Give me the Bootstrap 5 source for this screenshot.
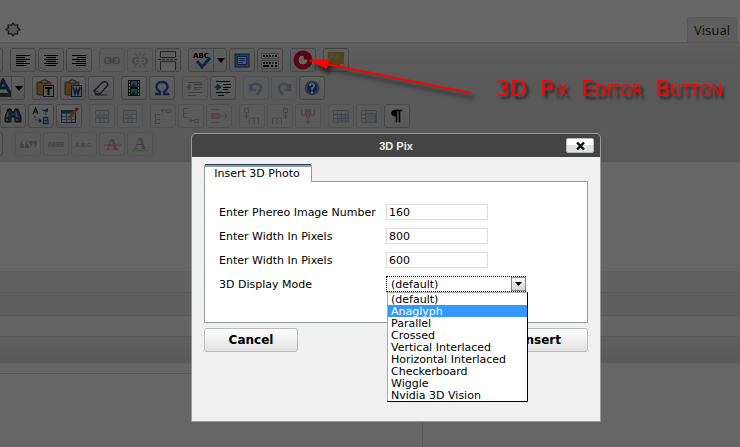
<!DOCTYPE html>
<html lang="en">
<head>
<meta charset="utf-8">
<meta name="viewport" content="width=device-width, initial-scale=1">
<title>3D Pix</title>
<link href="https://cdn.jsdelivr.net/npm/bootstrap@5.3.0/dist/css/bootstrap.min.css" rel="stylesheet">
<style>
body{font:11px/12px "DejaVu Sans",Verdana,sans-serif;color:#000;background:#fff}
.page{min-height:100vh}
.top-strip{height:43px;border-bottom:1px solid #d6d6d6}
.visual-tab{height:25px;width:50px;font:13px/20px "Noto Sans",sans-serif;color:#333;background:#ebebeb;border:1px solid #dcdcdc;border-bottom:0;border-radius:3px 3px 0 0;margin-right:3px;padding:0}
.tools{height:119px;background:linear-gradient(#ebebeb,#dedede 32px);padding-top:5px;gap:4px}
.tool-row{height:24px;gap:7px}
.tool-set{gap:2px}
.shift-a{margin-left:-23px}
.shift-b{margin-left:-14px}
.wide-gap{margin-right:5px}
.tool{width:26px;height:24px;padding:0;border:1px solid #b0b0b0;border-radius:3px;background:linear-gradient(#ececec,#dcdcdc);flex:none}
.tool.split{width:39px}
.tool:disabled{border-color:#c9c9c9;opacity:1;background:#e0e0e0}
.tool:disabled svg{opacity:.3}
.tool svg{display:block;width:20px;height:20px}
.tool .arrow-part{width:13px;height:22px;border-left:1px solid #b0b0b0}
.arrow-part svg{width:9px;height:5px}
.canvas-area{height:109px}
.band-a{height:22px;background:#f3f3f3;border-top:1px solid #ededed;border-bottom:1px solid #dcdcdc}
.band-b{height:23px;background:#ececec;border-bottom:1px solid #d8d8d8}
.band-c{height:21px;background:#fafafa;border-bottom:1px solid #dcdcdc}
.band-d{height:26px;background:linear-gradient(#eee,#e1e1e1)}
.meta{margin-top:10px;width:57.16%;border:solid #dcdcdc;border-width:1px 1px 0 0}
.shade{position:fixed;inset:0;background:rgba(0,0,0,.6)}
.note{position:absolute;left:300px;top:44px}
.note-text{display:flex;gap:13px;margin:33px 0 0 196px;font-size:22px;line-height:24px;font-variant:small-caps;color:#f00;text-shadow:3px 3px 3px #222;white-space:nowrap}
.note svg{position:absolute;left:0;top:0;overflow:visible}
.dialog-box{position:absolute;left:191px;top:133px;width:410px;border:1px solid #999;border-radius:5px 5px 0 0;background:#f0f0f0}
.dialog-head{height:23px;background:#444;border-radius:4px 4px 0 0;font:bold 11px/22px "Liberation Sans",Arial,sans-serif;color:#eee;display:grid;grid-template-columns:1fr auto 1fr;align-items:center;padding:0 6px}
.close-x{width:28px;height:15px;border:1px solid #bbb;border-radius:2px;background:linear-gradient(#fff 50%,#dde1e1 50%)}
.dialog-main{padding:7px 12px 69px}
.photo-tab{height:18px;width:108px;border:1px solid #919b9c;border-top:3px solid #8a9dad;border-bottom:0;border-radius:3px 3px 0 0;background:#fcfcfe;position:relative;z-index:1;margin-bottom:-1px;padding:0 2px 1px 0;line-height:12px;font-size:11px}
.photo-tab::before{content:"";position:absolute;left:0;right:0;top:-3px;height:1px;background:#2c4058}
.pane{border:1px solid #919b9c;background:#fff;padding:22px 14px 30px;display:grid;gap:8px}
.field-line{display:grid;grid-template-columns:167px 1fr;align-items:center;height:16px}
.field-line label{padding-top:2px}
.text-in{width:102px;height:16px;border:1px solid #dcdcdc;padding:0 2px;font-size:11px;line-height:14px;border-radius:0;color:#000;background:#fff}
.mode{position:relative;width:141px}
.mode select{display:block;appearance:none;width:140px;height:16px;border:1px dotted #000;border-radius:0;padding:1px 4px 0;background:#fff;color:#000;font-size:11px;line-height:14px}
.drop-mark{position:absolute;right:1px;top:1px;width:15px;height:14px;border:1px solid #888;background:linear-gradient(#fff,#d4d4d4);pointer-events:none}
.choices{position:absolute;z-index:3;left:1px;top:16px;width:141px;border:solid #000;border-width:1px;border-top-color:#aaa;border-left-color:#aaa;background:#fff;margin:0;padding:0;list-style:none}
.choices li{height:12px;padding-left:3px;line-height:13px}
.choices .chosen{background:#39f;color:#fff}
.actions{margin-top:5px}
.act{width:94px;height:24px;border:1px solid #bbb;border-radius:3px;background:linear-gradient(#fff,#e2e2e2);font-size:12px;font-weight:bold;color:#000;padding:0}
</style>
<script src="https://cdn.jsdelivr.net/npm/bootstrap@5.3.0/dist/js/bootstrap.bundle.min.js"></script>
</head>
<body class="overflow-hidden">
<div class="page d-flex flex-column">
  <div class="top-strip d-flex justify-content-between align-items-end">
    <svg class="align-self-center ms-1 mt-3" width="18" height="18" viewBox="0 0 18 18" aria-hidden="true"><path d="M9 3l1.800 2.300 3-.6-.2 2.900L16 9.500l-2.500 1.500.1 3-2.900-.3L9 16l-1.700-2.300-2.900.3.1-3L2 9.500l2.400-1.900-.2-2.900 3 .6z" fill="#ddd" stroke="#444" stroke-width="1.300"/></svg>
    <button class="visual-tab" type="button">Visual</button>
  </div>
  <div class="tools d-flex flex-column overflow-hidden">
    <div class="tool-row d-flex shift-a">
      <div class="tool-set d-flex"><button class="tool" aria-label="Quote"></button></div>
      <div class="tool-set d-flex">
        <button class="tool d-flex align-items-center justify-content-center" aria-label="Align left"><svg viewBox="0 0 20 20"><path d="M3 5.500h14M3 7.500h9M3 9.500h14M3 11.500h10M3 13.500h14M3 15.500h10" stroke="#000"/></svg></button>
        <button class="tool d-flex align-items-center justify-content-center" aria-label="Align center"><svg viewBox="0 0 20 20"><path d="M3 5.500h14M5 7.500h10M3 9.500h14M5 11.500h10M3 13.500h14M5 15.500h10" stroke="#000"/></svg></button>
        <button class="tool d-flex align-items-center justify-content-center" aria-label="Align right"><svg viewBox="0 0 20 20"><path d="M3 5.500h14M8 7.500h9M3 9.500h14M7 11.500h10M3 13.500h14M7 15.500h10" stroke="#000"/></svg></button>
      </div>
      <div class="tool-set d-flex">
        <button disabled class="tool d-flex align-items-center justify-content-center" aria-label="Link"><svg viewBox="0 0 20 20"><g fill="none" stroke="#335" stroke-width="1.600"><rect x="3" y="7.500" width="6" height="6" rx="2.500"/><rect x="11" y="7.500" width="6" height="6" rx="2.500"/><path d="M6.500 10.500h7"/></g></svg></button>
        <button disabled class="tool d-flex align-items-center justify-content-center" aria-label="Unlink"><svg viewBox="0 0 20 20"><g fill="none" stroke="#335" stroke-width="1.500"><path d="M9 8H5.500q-2.500 0-2.500 3t2.500 3H8M11 8h3.500q2.500 0 2.500 3t-2.500 3H12M6 11h3M12 11h2"/><path d="M10 2v3M5 3l2 3M15 3l-2 3M10 15v3M6 15l-2 3M14 15l2 3" stroke-width="1"/></g></svg></button>
        <button class="tool d-flex align-items-center justify-content-center" aria-label="Page break"><svg viewBox="0 0 20 20"><path d="M2.500 1v6.500h15V1M2.500 1.500h15M2.500 20v-8.500h15V20" fill="#ececec" stroke="#6b5548"/><path d="M0 9.500h20" stroke="#36c" stroke-dasharray="3 1"/></svg></button>
      </div>
      <div class="tool-set d-flex">
        <button class="tool split d-flex align-items-center justify-content-between ps-1" aria-label="Spell check"><svg viewBox="0 0 20 20"><text x="0" y="8" font-family="DejaVu Sans" font-size="7" font-weight="bold">ABC</text><path d="M4 11l5 6 8-9" stroke="#2858b0" stroke-width="3" fill="none"/></svg><span class="arrow-part d-flex align-items-center justify-content-center"><svg viewBox="0 0 9 5"><path d="M1 0h8L5 5z"/></svg></span></button>
        <button class="tool d-flex align-items-center justify-content-center" aria-label="Full screen"><svg viewBox="0 0 20 20"><rect x="3" y="4" width="14" height="13" fill="#69c" stroke="#258"/><rect x="5.500" y="6.500" width="9" height="8" fill="#cdd8ee" stroke="#25a"/><path d="M7 8.500h6M7 10.500h6M7 12.500h4" stroke="#36b"/></svg></button>
        <button class="tool d-flex align-items-center justify-content-center" aria-label="Show toolbars"><svg viewBox="0 0 20 20"><path d="M1.500 3.500h17v5h-17zM1.500 10.500h17v8h-17z" fill="#e8e8e8" stroke="#aaa"/><path d="M3 6h14M3 13h14" stroke="#333" stroke-width="2" stroke-dasharray="2 1"/><path d="M3 16h6M11 16h2M15 16h2" stroke="#000" stroke-width="2"/><path d="M12 6h2M12 13h2" stroke="#286" stroke-width="2"/></svg></button>
      </div>
      <div class="tool-set d-flex"><button class="tool d-flex align-items-center justify-content-center" aria-label="3D Pix"><svg viewBox="0 0 20 20"><circle cx="10" cy="10" r="9.500" fill="#d81038"/><path d="M10 6a4 4 0 1 0 4 4h-3.500z" fill="#fff" stroke="#fff"/></svg></button></div>
      <div class="tool-set d-flex"><button class="tool d-flex align-items-center justify-content-center" aria-label="Insert note"><svg viewBox="0 0 20 20"><path d="M2 2h16v12l-4 4H2z" fill="#d8a83c"/><path d="M18 14h-4v4z" fill="#f0e090"/><path d="M3 9l4-4M8 9l4-4" stroke="#bbb" stroke-width="3"/></svg></button></div>
    </div>

    <div class="tool-row d-flex shift-b">
      <div class="tool-set d-flex"><button class="tool split d-flex align-items-center justify-content-between ps-1" aria-label="Text color"><svg viewBox="0 0 20 20"><path d="M7 13l5-11 7 13M9 10h7" fill="none" stroke="#247" stroke-width="3"/><path d="M0 17h20" stroke="#444" stroke-width="4"/></svg><span class="arrow-part d-flex align-items-center justify-content-center"><svg viewBox="0 0 9 5"><path d="M1 0h8L5 5z"/></svg></span></button></div>
      <div class="tool-set d-flex">
        <button class="tool d-flex align-items-center justify-content-center" aria-label="Paste text"><svg viewBox="0 0 20 20"><rect x="2" y="4" width="14" height="13" rx="1" fill="#d09a44" stroke="#754"/><path d="M6 5V3h2V2h3v1h2v2z" fill="#dde" stroke="#555"/><rect x="8.500" y="7.500" width="10" height="11" fill="#ddd" stroke="#333"/><path d="M10 10h7M13.500 10v7" stroke="#000" stroke-width="2"/></svg></button>
        <button class="tool d-flex align-items-center justify-content-center" aria-label="Paste Word"><svg viewBox="0 0 20 20"><rect x="2" y="4" width="14" height="13" rx="1" fill="#d09a44" stroke="#754"/><path d="M6 5V3h2V2h3v1h2v2z" fill="#dde" stroke="#555"/><rect x="8.500" y="7.500" width="10" height="11" fill="#cde" stroke="#247"/><path d="M10 9l2 7 1.500-5 1.500 5 2-7" fill="none" stroke="#149" stroke-width="1.600"/></svg></button>
        <button class="tool d-flex align-items-center justify-content-center" aria-label="Remove formatting"><svg viewBox="0 0 20 20"><path d="M3 13L12 4q4-1 5 3l-8 9H5z" fill="#eee" stroke="#445" stroke-width="1.400"/><path d="M3 13q4-1 6 3M4 17h12" fill="none" stroke="#445"/></svg></button>
      </div>
      <div class="tool-set d-flex">
        <button class="tool d-flex align-items-center justify-content-center" aria-label="Media"><svg viewBox="0 0 20 20"><rect x="4" y="2" width="12" height="16" fill="#222"/><path d="M7 3h6v6H7z" fill="#5ad"/><path d="M7 11h6v6H7z" fill="#4a8"/><path d="M5.500 3v15M14.500 3v15" stroke="#ddd" stroke-dasharray="2 1"/><path d="M7 8l2-3 4 4H7zM7 16l2-3 4 4H7z" fill="#263"/></svg></button>
        <button class="tool d-flex align-items-center justify-content-center" aria-label="Special character"><svg viewBox="0 0 20 20"><path d="M3 16h5v-2Q4 11 4.500 8 5.500 4 10 4t5.500 4q.5 3-3.500 6v2h5" fill="none" stroke="#2858b8" stroke-width="2.400"/></svg></button>
      </div>
      <div class="tool-set d-flex">
        <button disabled class="tool d-flex align-items-center justify-content-center" aria-label="Outdent"><svg viewBox="0 0 20 20"><path d="M3 4.500h14M9 6.500h8M9 9.500h8M9 11.500h6M3 14.500h14M3 17.500h8" stroke="#000"/><path d="M7 9H3M5 6L2 9l3 3z" stroke="#259" fill="#259"/></svg></button>
        <button class="tool d-flex align-items-center justify-content-center" aria-label="Indent"><svg viewBox="0 0 20 20"><path d="M3 3.500h14M10 6.500h8M10 9.500h8M10 11.500h5M3 14.500h14M5 17.500h6" stroke="#000"/><path d="M1 9h5M4 6l4 3-4 3z" stroke="#259" fill="#259"/></svg></button>
      </div>
      <div class="tool-set d-flex">
        <button disabled class="tool d-flex align-items-center justify-content-center" aria-label="Undo"><svg viewBox="0 0 20 20"><path d="M4 6v6h6M5 11q1-6 6-5 6 1 3 7l-3 4" fill="none" stroke="#259" stroke-width="2.600"/></svg></button>
        <button disabled class="tool d-flex align-items-center justify-content-center" aria-label="Redo"><svg viewBox="0 0 20 20"><path d="M16 6v6h-6M15 11q-1-6-6-5-6 1-3 7l3 4" fill="none" stroke="#259" stroke-width="2.600"/></svg></button>
        <button class="tool d-flex align-items-center justify-content-center" aria-label="Help"><svg viewBox="0 0 20 20"><circle cx="10" cy="10" r="7" fill="#2452a8" stroke="#8ab" stroke-width="1"/><circle cx="10" cy="10" r="5.500" fill="none" stroke="#9bd"/><path d="M8 8q0-2 2-2t2 2q0 1-2 2.500V12M10 13v2" fill="none" stroke="#fff" stroke-width="1.700"/></svg></button>
      </div>
    </div>

    <div class="tool-row d-flex">
      <div class="tool-set d-flex">
        <button class="tool d-flex align-items-center justify-content-center" aria-label="Find"><svg viewBox="0 0 20 20"><path d="M5 3h3l1 3h2l1-3h3l3 8v5h-6v-5H8v5H2v-5z" fill="#456" stroke="#123"/><path d="M5 6l-1 5M13 6l1 5M4 13v2M14 13v2" stroke="#9bd" stroke-width="1.400"/></svg></button>
        <button class="tool d-flex align-items-center justify-content-center" aria-label="Replace"><svg viewBox="0 0 20 20"><path d="M2 8l2.500-6L7 8M3 6h3" fill="none" stroke="#222" stroke-width="1.200"/><path d="M12.500 11v7M12.500 11.500h4v3h-4h4.500v3h-4.500" fill="none" stroke="#36b" stroke-width="1.300"/><path d="M4 10q0 5 5 5M11 4q4 0 4 5" fill="none" stroke="#258" stroke-dasharray="2 1"/><path d="M8 12l3 3-3 2zM12 5l5-3v4z" fill="#25b"/></svg></button>
        <button class="tool d-flex align-items-center justify-content-center" aria-label="Table"><svg viewBox="0 0 20 20"><rect x="2.500" y="4.500" width="14" height="12" fill="#dde" stroke="#345"/><path d="M3 6h13" stroke="#369" stroke-width="3"/><path d="M7.500 7v9M12.500 7v9M3 10.500h13M3 13.500h13" stroke="#69c"/><path d="M10 12l8-9" stroke="#d98b2b" stroke-width="3"/><path d="M17 4l2-2" stroke="#c33" stroke-width="3"/></svg></button>
      </div>
      <div class="tool-set d-flex">
        <button disabled class="tool d-flex align-items-center justify-content-center" aria-label="Row properties"><svg viewBox="0 0 20 20"><path d="M3.500 4.500h13v12h-13zM3 8.500h14M3 12.500h14M8 4v13M12 4v13" fill="none" stroke="#456"/><path d="M3 8h14v4H3z" fill="#69b"/></svg></button>
        <button disabled class="tool d-flex align-items-center justify-content-center" aria-label="Cell properties"><svg viewBox="0 0 20 20"><path d="M3.500 4.500h13v12h-13zM3 8.500h14M3 12.500h14M8 4v13M12 4v13" fill="none" stroke="#456"/><path d="M8 8h5v4H8z" fill="#69b"/></svg></button>
      </div>
      <div class="tool-set d-flex">
        <button disabled class="tool d-flex align-items-center justify-content-center" aria-label="Row before"><svg viewBox="0 0 20 20"><path d="M2.500 8v10M2 8.500h5M2 13.500h5M2 17.500h5M9 4.500h4M11 2.500l-3 2 3 2M13.500 3.500h4v3h-4z" fill="none" stroke="#345"/></svg></button>
        <button disabled class="tool d-flex align-items-center justify-content-center" aria-label="Row after"><svg viewBox="0 0 20 20"><path d="M2.500 2v10M2 2.500h5M2 7.500h5M2 11.500h5M9 14.500h4M11 12.500l-3 2 3 2M13.500 13.500h4v3h-4z" fill="none" stroke="#345"/></svg></button>
        <button disabled class="tool d-flex align-items-center justify-content-center" aria-label="Delete row"><svg viewBox="0 0 20 20"><path d="M2 3.500h8M2 7.500h8M2 12.500h8M2 16.500h8M12 10h6M15 7l3 3-3 3" fill="none" stroke="#345"/><path d="M2 8h10v4H2z" fill="#d43"/></svg></button>
      </div>
      <div class="tool-set d-flex">
        <button disabled class="tool d-flex align-items-center justify-content-center" aria-label="Column before"><svg viewBox="0 0 20 20"><path d="M2.500 2.500h4v4h-4zM4.500 7v5M2.500 9.500l2 3 2-3M7.500 18v-6h9v6M12 12v6" fill="none" stroke="#345"/></svg></button>
        <button disabled class="tool d-flex align-items-center justify-content-center" aria-label="Column after"><svg viewBox="0 0 20 20"><path d="M13.500 2.500h4v4h-4zM15.500 7v5M13.500 9.500l2 3 2-3M2.500 18v-6h9v6M7 12v6" fill="none" stroke="#345"/></svg></button>
        <button disabled class="tool d-flex align-items-center justify-content-center" aria-label="Delete column"><svg viewBox="0 0 20 20"><path d="M3.500 3v6h4V3M12.500 3v6h4V3M10 12v6M8 15l2 3 2-3" fill="none" stroke="#345"/><path d="M8 3h4v9H8z" fill="#d43"/></svg></button>
      </div>
      <div class="tool-set d-flex">
        <button disabled class="tool d-flex align-items-center justify-content-center" aria-label="Split cells"><svg viewBox="0 0 20 20"><path d="M2.500 4.500h15v12h-15z" fill="none" stroke="#345"/><path d="M6 8h11v9H6z" fill="#8ac"/><path d="M2 8.500h15M2 12.500h15M6.500 4v13M10.500 4v13M14.500 4v13" stroke="#247"/></svg></button>
        <button disabled class="tool d-flex align-items-center justify-content-center" aria-label="Merge cells"><svg viewBox="0 0 20 20"><path d="M2.500 4.500h15v12h-15zM2 8.500h4M2 12.500h4M6.500 4v4M12 4v4" fill="none" stroke="#345"/><path d="M6.500 7.500h10v9h-10z" fill="#7ac" stroke="#247"/></svg></button>
        <button class="tool d-flex align-items-center justify-content-center" aria-label="Paragraph marks"><svg viewBox="0 0 20 20"><path d="M15 4H8Q4.500 4 4.500 7T8 10h1v6h1V5h2v11h1V5h2z" stroke="#000" stroke-width=".6"/></svg></button>
      </div>
    </div>

    <div class="tool-row d-flex shift-a">
      <div class="tool-set d-flex wide-gap"><button class="tool" aria-label="Layer"></button></div>
      <div class="tool-set d-flex">
        <button disabled class="tool d-flex align-items-center justify-content-center" aria-label="Citation"><svg viewBox="0 0 20 20"><path d="M5 6q-3 2-3 6v2h4v-4H4q0-2 1-4M10 6q-3 2-3 6v2h4v-4H9q0-2 1-4M11 7h3.500q0 6-3 7l1.500-4h-2zM15.500 7H19q0 6-3 7l1.500-4h-2z" fill="#335"/></svg></button>
        <button disabled class="tool d-flex align-items-center justify-content-center" aria-label="Abbreviation"><svg viewBox="0 0 20 20"><text x="10" y="13" text-anchor="middle" font-family="DejaVu Sans Mono" font-size="7" font-weight="bold" fill="#224">ABBR</text></svg></button>
        <button disabled class="tool d-flex align-items-center justify-content-center" aria-label="Acronym"><svg viewBox="0 0 20 20"><text x="10" y="13" text-anchor="middle" font-family="Liberation Sans" font-size="6" font-weight="bold" fill="#224">A.B.C.</text></svg></button>
        <button disabled class="tool d-flex align-items-center justify-content-center" aria-label="Deletion"><svg viewBox="0 0 20 20"><text x="4" y="16" font-family="Liberation Serif" font-size="17" font-weight="bold" fill="#224">A</text><path d="M2 11h17" stroke="#e00" stroke-width="1.500"/></svg></button>
        <button disabled class="tool d-flex align-items-center justify-content-center" aria-label="Insertion"><svg viewBox="0 0 20 20"><text x="4" y="15" font-family="Liberation Serif" font-size="17" font-weight="bold" fill="#224">A</text><path d="M2 16.500h17" stroke="#2a0" stroke-width="1.500"/></svg></button>
      </div>
    </div>
  </div>
  <div class="canvas-area"></div>
  <div class="band-a"></div><div class="band-b"></div><div class="band-c"></div><div class="band-d"></div>
  <div class="meta flex-grow-1"></div>
</div>
<div class="shade"></div>

<div class="note">
  <svg width="180" height="60" viewBox="0 0 180 60" aria-hidden="true">
    <g style="filter:drop-shadow(3px 5px 2px #222)"><path d="M26 20L171 49" stroke="#f00" stroke-width="2"/><path d="M8 16l21-1-2 10z" fill="#f00"/></g>
  </svg>
  <div class="note-text"><span>3D</span> <span>Pix</span> <span>Editor</span> <span>Button</span></div>
</div>

<form class="dialog-box" role="dialog" aria-labelledby="dlg-title">
  <div class="dialog-head"><span></span><span id="dlg-title">3D Pix</span>
    <button type="button" class="close-x p-0 d-flex align-items-center justify-content-center ms-auto" aria-label="Close"><svg width="9" height="8" viewBox="0 0 9 8"><path d="M1 .5l7 7M8 .5l-7 7" stroke="#111" stroke-width="2.400"/></svg></button>
  </div>
  <div class="dialog-main">
    <button type="button" class="photo-tab d-block">Insert 3D Photo</button>
    <div class="pane">
      <div class="field-line"><label for="num">Enter Phereo Image Number</label><input class="text-in" id="num" value="160"></div>
      <div class="field-line"><label for="wid">Enter Width In Pixels</label><input class="text-in" id="wid" value="800"></div>
      <div class="field-line"><label for="hei">Enter Width In Pixels</label><input class="text-in" id="hei" value="600"></div>
      <div class="field-line"><label for="mode">3D Display Mode</label>
        <div class="mode"><select id="mode"><option>(default)</option></select>
          <span class="drop-mark d-flex align-items-end justify-content-center"><svg class="d-block mb-1" width="7" height="4" viewBox="0 0 7 4"><path d="M0 0h7L3.500 4z"/></svg></span>
          <ul class="choices" role="listbox" aria-label="3D Display Mode">
            <li role="option">(default)</li><li role="option" class="chosen" aria-selected="true">Anaglyph</li><li role="option">Parallel</li><li role="option">Crossed</li><li role="option">Vertical Interlaced</li><li role="option">Horizontal Interlaced</li><li role="option">Checkerboard</li><li role="option">Wiggle</li><li role="option">Nvidia 3D Vision</li>
          </ul></div>
      </div>
    </div>
    <div class="actions d-flex justify-content-between"><button type="button" class="act">Cancel</button><button type="button" class="act">Insert</button></div>
  </div>
</form>
</body>
</html>
